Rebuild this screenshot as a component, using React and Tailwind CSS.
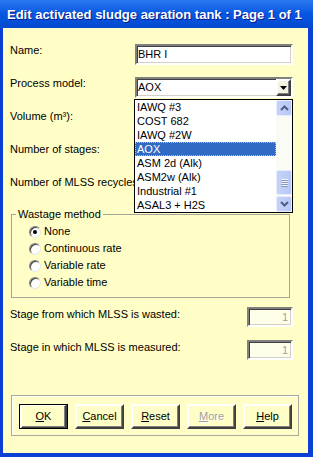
import React from 'react';

const items = ['IAWQ #3', 'COST 682', 'IAWQ #2W', 'AOX', 'ASM 2d (Alk)', 'ASM2w (Alk)', 'Industrial #1', 'ASAL3 + H2S'];

const sunken =
    'border-2 border-t-[#808080] border-l-[#808080] border-b-white border-r-white shadow-[inset_1px_1px_0_#404040,inset_-1px_-1px_0_#d4d0c8]';

const raised =
    'border-2 border-t-white border-l-white border-b-[#404040] border-r-[#404040] shadow-[inset_-1px_-1px_0_#808080]';

function Field({ children }) {
    return (
        <div className={`w-[158px] h-[21px] bg-white flex items-center pl-[1px] ${sunken}`}>
            {children}
        </div>
    );
}

function Row({ label, children }) {
    return (
        <div className="flex items-start h-[21px]">
            <span className="w-[125px] leading-[13px] whitespace-nowrap">{label}</span>
            {children}
        </div>
    );
}

function Radio({ checked, label }) {
    return (
        <div className="flex items-center h-[17px] gap-[3px]">
            <span className="w-[12px] h-[12px] rounded-full bg-white border border-t-[#808080] border-l-[#808080] border-b-[#e8e8e0] border-r-[#e8e8e0] shadow-[inset_1px_1px_0_#404040] flex items-center justify-center">
                {checked && <span className="w-[4px] h-[4px] rounded-full bg-black" />}
            </span>
            <span className="leading-[13px]">{label}</span>
        </div>
    );
}

function Chevron({ up }) {
    return (
        <svg width="9" height="6" viewBox="0 0 9 6">
            <path
                d={up ? 'M1 5 L4.5 1.5 L8 5' : 'M1 1 L4.5 4.5 L8 1'}
                fill="none"
                stroke="#4d6185"
                strokeWidth="2"
            />
        </svg>
    );
}

function ScrollBtn({ children, h = 'h-[16px]' }) {
    return (
        <div className={`${h} w-[16px] rounded-[2px] border border-[#e6ecfb] bg-gradient-to-r from-[#c6d3f7] to-[#b6c8f6] flex items-center justify-center`}>
            {children}
        </div>
    );
}

function Btn({ under, rest, isDefault, disabled }) {
    return (
        <div
            className={`w-[49px] h-[25px] flex items-center justify-center ${isDefault ? 'outline outline-1 outline-black -outline-offset-1' : ''}`}
        >
            <div className={`w-full h-full flex items-center justify-center ${raised} ${isDefault ? 'm-[1px]' : ''}`}>
                <span
                    className={
                        disabled
                            ? 'text-[#a0a0a0] [text-shadow:1px_1px_0_#ffffff]'
                            : 'text-black'
                    }
                >
                    <span className="underline underline-offset-[1px]">{under}</span>
                    {rest}
                </span>
            </div>
        </div>
    );
}

export default function App() {
    return (
        <div className="w-[313px] h-[457px] flex flex-col bg-[#0b3fd5] font-['Liberation_Sans',Arial,sans-serif] text-[11px] text-black">
            {/* Title bar */}
            <div className="h-[28px] shrink-0 flex items-center pl-[7px] bg-gradient-to-b from-[#2a78f0] via-[#0557e2] to-[#0449cf]">
                <span className="text-white font-bold text-[13px] leading-none whitespace-nowrap [text-shadow:1px_1px_0_#0f1a8a]">
                    Edit activated sludge aeration tank : Page 1 of 1
                </span>
            </div>

            {/* Body */}
            <div className="relative flex-1 ml-[3px] mr-[5px] mb-[4px] bg-[#fffec6] pl-[7px] pt-[16px]">
                <div className="flex flex-col gap-[12px] w-[283px]">
                    <Row label="Name:">
                        <Field>BHR I</Field>
                    </Row>
                    <Row label="Process model:">
                        <Field>
                            <span className="flex-1">AOX</span>
                            <div className={`w-[15px] h-[17px] bg-[#f4f3e2] flex items-center justify-center ${raised}`}>
                                <svg width="7" height="4" viewBox="0 0 7 4">
                                    <path d="M0 0 H7 L3.5 4 Z" fill="#000" />
                                </svg>
                            </div>
                        </Field>
                    </Row>
                    <Row label="Volume (m³):">
                        <Field />
                    </Row>
                    <Row label="Number of stages:">
                        <Field />
                    </Row>
                    <Row label="Number of MLSS recycles:">
                        <Field />
                    </Row>
                </div>

                {/* Wastage method */}
                <fieldset className="mt-[11px] ml-[1px] w-[279px] border border-[#a7a69c]">
                    <legend className="ml-[4px] px-[2px] leading-[13px]">Wastage method</legend>
                    <div className="pl-[17px] pt-[2px] pb-[6px]">
                        <Radio checked label="None" />
                        <Radio label="Continuous rate" />
                        <Radio label="Variable rate" />
                        <Radio label="Variable time" />
                    </div>
                </fieldset>

                <div className="flex flex-col gap-[13px] w-[283px] mt-[9px]">
                    {['Stage from which MLSS is wasted:', 'Stage in which MLSS is measured:'].map((l) => (
                        <div key={l} className="flex items-start justify-between h-[20px]">
                            <span className="leading-[13px] pt-[1px]">{l}</span>
                            <div className={`w-[46px] h-[20px] bg-[#fffee8] flex items-center justify-end pr-[3px] text-[#a0a0a0] ${sunken}`}>
                                1
                            </div>
                        </div>
                    ))}
                </div>

                {/* Buttons */}
                <div className="mt-[35px] ml-[1px] w-[288px] h-[41px] border border-[#a8a89c] shadow-[inset_1px_1px_0_#ffffff] flex items-start gap-[7px] pl-[7px] pt-[8px]">
                    <Btn under="O" rest="K" isDefault />
                    <Btn under="C" rest="ancel" />
                    <Btn under="R" rest="eset" />
                    <Btn under="M" rest="ore" disabled />
                    <Btn under="H" rest="elp" />
                </div>

                {/* Open drop-down list */}
                <div className="absolute left-[131px] top-[71px] w-[159px] h-[114px] border border-black bg-white flex">
                    <div className="flex-1 flex flex-col">
                        {items.map((it) => (
                            <div
                                key={it}
                                className={`h-[14px] leading-[14px] pl-[2px] whitespace-nowrap ${
                                    it === 'AOX'
                                        ? 'bg-[#316ac5] text-white outline outline-1 outline-dotted outline-[#d8c070] -outline-offset-1'
                                        : ''
                                }`}
                            >
                                {it}
                            </div>
                        ))}
                    </div>
                    <div className="w-[16px] flex flex-col bg-[#fbfbf6]">
                        <ScrollBtn>
                            <Chevron up />
                        </ScrollBtn>
                        <div className="h-[54px]" />
                        <ScrollBtn h="h-[25px]">
                            <div className="flex flex-col gap-[1px]">
                                {[0, 1, 2, 3].map((i) => (
                                    <span key={i} className="block w-[7px] h-[1px] bg-[#eef4fe] shadow-[0_1px_0_#8c97be]" />
                                ))}
                            </div>
                        </ScrollBtn>
                        <div className="h-[1px]" />
                        <ScrollBtn>
                            <Chevron />
                        </ScrollBtn>
                    </div>
                </div>
            </div>
        </div>
    );
}
